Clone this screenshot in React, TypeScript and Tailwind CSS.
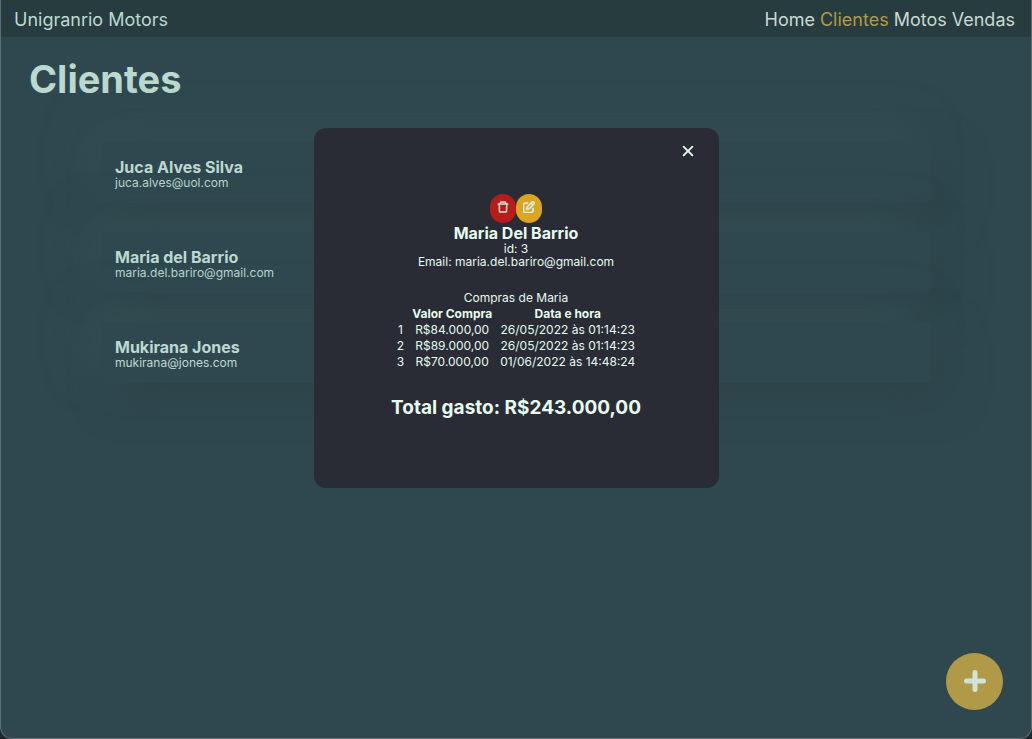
import { AiOutlineDelete } from 'react-icons/ai'
import { FaRegPenToSquare } from 'react-icons/fa6'
import { IoClose } from 'react-icons/io5'

const links = ['Home', 'Clientes', 'Motos', 'Vendas']

const clients = [
  { name: 'Juca Alves Silva', email: 'juca.alves@uol.com' },
  { name: 'Maria del Barrio', email: 'maria.del.bariro@gmail.com' },
  { name: 'Mukirana Jones', email: 'mukirana@jones.com' },
]

const purchases = [
  { id: 1, value: 'R$84.000,00', date: '26/05/2022 às 01:14:23' },
  { id: 2, value: 'R$89.000,00', date: '26/05/2022 às 01:14:23' },
  { id: 3, value: 'R$70.000,00', date: '01/06/2022 às 14:48:24' },
]

function Navbar() {
  return (
    <header className="flex h-[37px] items-center justify-between bg-[#263c3f] pt-0.5 pr-4 pl-[13px] text-lg">
      <span>Unigranrio Motors</span>
      <nav className="flex gap-[5px]">
        {links.map(link => (
          <a key={link} href="#" className={link === 'Clientes' ? 'text-[#b09a48]' : 'text-[#c6dad3]'}>
            {link}
          </a>
        ))}
      </nav>
    </header>
  )
}

function ClientModal() {
  return (
    <div role="dialog" aria-modal="true" aria-label="Maria Del Barrio"
         className="relative flex min-h-[360px] w-[405px] flex-col items-center rounded-xl bg-[#292c35] pt-[66px] text-xs leading-[13px] text-[#e6fbee]">
      <button aria-label="Fechar" className="absolute top-[13px] right-[21px]">
        <IoClose size={20} />
      </button>

      {/* Actions */}
      <div className="flex text-[#dceee2]">
        <button aria-label="Excluir" className="flex h-[29px] w-[26px] justify-center rounded-full bg-[#b71c1c] pt-1.5">
          <AiOutlineDelete size={14} strokeWidth={30} />
        </button>
        <button aria-label="Editar" className="flex h-[29px] w-[26px] justify-center rounded-full bg-[#daa520] pt-[7px]">
          <FaRegPenToSquare size={12} strokeWidth={24} stroke="currentColor" />
        </button>
      </div>

      <h2 className="text-base leading-5 font-bold">Maria Del Barrio</h2>
      <p className="leading-3">id: 3</p>
      <p>Email: maria.del.bariro@gmail.com</p>

      {/* Purchases */}
      <table className="mt-[22px] text-center">
        <caption className="leading-[15px]">Compras de Maria</caption>
        <thead>
          <tr className="h-4">
            <td />
            <th className="px-1">Valor Compra</th>
            <th className="px-1">Data e hora</th>
          </tr>
        </thead>
        <tbody>
          {purchases.map(p => (
            <tr key={p.id} className="h-4">
              <td className="px-1">{p.id}</td>
              <td className="px-1">{p.value}</td>
              <td className="px-1">{p.date}</td>
            </tr>
          ))}
        </tbody>
      </table>

      <p className="mt-[27px] text-[19px] leading-6 font-bold">Total gasto: R$243.000,00</p>
    </div>
  )
}

export default function App() {
  return (
    <div className="min-h-screen bg-[#1d2528] font-['Inter',sans-serif]">
      <div className="min-h-screen overflow-hidden rounded-b-xl border border-t-0 border-[#5c7074] bg-[#2f484f] text-[#bcd9cf]">
        <Navbar />
        <main className="px-7 pt-4">
          <h1 className="text-[38px] leading-[52px] font-bold">Clientes</h1>
          <ul className="mx-[72px] mt-[37px] flex flex-col gap-[29px]">
            {clients.map(client => (
              <li key={client.email}
                  className="flex h-[61px] flex-col justify-center rounded-md bg-[#2f484f] px-[14px] shadow-[14px_14px_40px_#2d4349,-14px_-14px_40px_#354f55]">
                <h2 className="text-base leading-5 font-bold">{client.name}</h2>
                <p className="text-xs leading-3">{client.email}</p>
              </li>
            ))}
          </ul>
        </main>
      </div>

      <button aria-label="Adicionar cliente"
              className="fixed right-[29px] bottom-[29px] flex size-[57px] items-center justify-center rounded-full bg-[#b09a48] pb-0.5 text-[#cfe3d6]">
        <svg width="22" height="22" viewBox="0 0 22 22" stroke="currentColor" strokeWidth="5" strokeLinecap="round">
          <path d="M11 2.5v17M2.5 11h17" />
        </svg>
      </button>

      <div className="fixed inset-x-0 top-32 flex justify-center">
        <ClientModal />
      </div>
    </div>
  )
}
